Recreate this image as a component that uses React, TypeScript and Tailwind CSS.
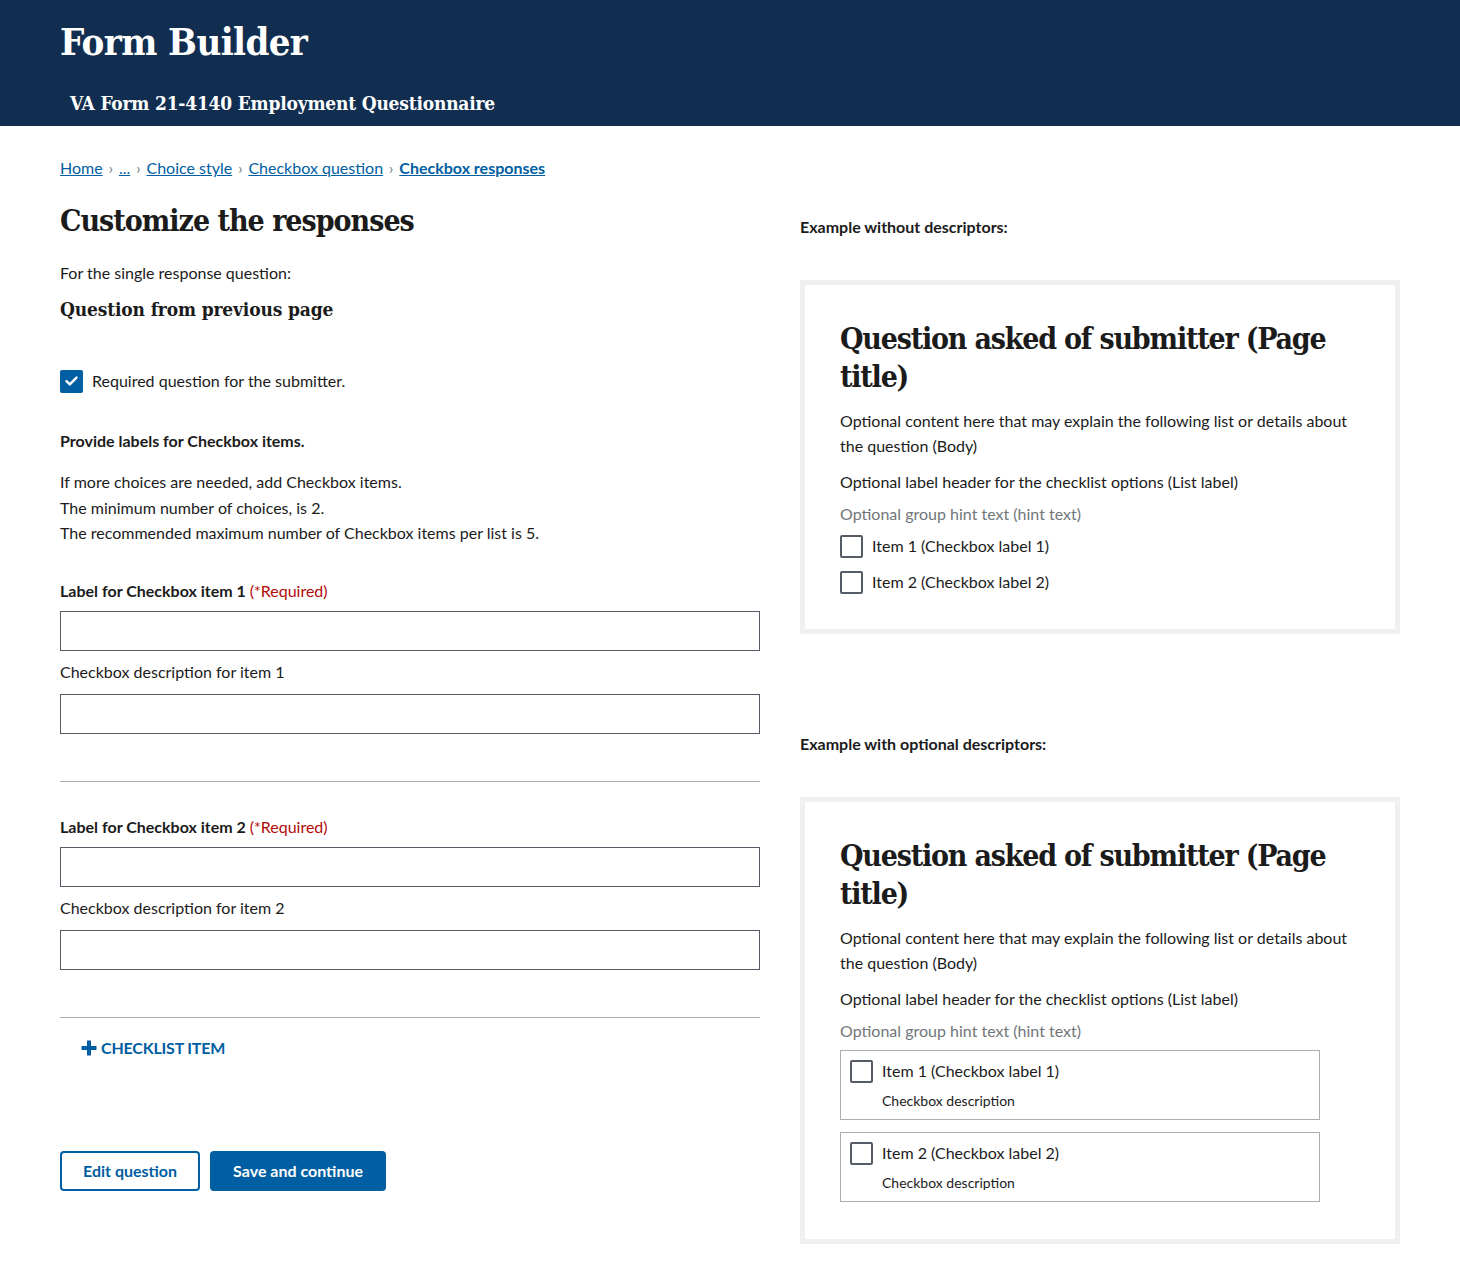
const serif = "font-['DejaVu_Serif_Condensed','DejaVu_Serif',serif]";

const Crumb = ({ children, last }: { children: string; last?: boolean }) => (
  <>
    <a className={`text-[#005ea2] underline ${last ? "font-bold" : ""}`} href="#">
      {children}
    </a>
    {!last && <span className="mx-[6px] text-[15px] text-[#71767a]">›</span>}
  </>
);

const TextField = () => (
  <input type="text" className="block h-10 w-full border border-[#565c65] bg-white px-2" />
);

const ItemFields = ({ n }: { n: number }) => (
  <div className="pt-[34px] pb-[47px] border-b border-[#a9aeb1]">
    <label className="block font-bold leading-[22px]">
      Label for Checkbox item {n} <span className="font-normal text-[#b50909]">(*Required)</span>
    </label>
    <div className="mt-[9px]">
      <TextField />
    </div>
    <div className="mt-[10px] leading-[22px]">Checkbox description for item {n}</div>
    <div className="mt-[11px]">
      <TextField />
    </div>
  </div>
);

const EmptyBox = () => (
  <span className="inline-block h-[23px] w-[23px] shrink-0 rounded-[2px] border-2 border-[#565c65] bg-white" />
);

const Preview = ({ tiles }: { tiles?: boolean }) => (
  <div className={`border-[5px] border-[#f0f0f0] px-[35px] pt-[35px] ${tiles ? "pb-[37px]" : "pb-[35px]"}`}>
    <h2 className={`${serif} text-[30px] font-bold leading-[38px] tracking-[-1.2px]`}>
      Question asked of submitter (Page title)
    </h2>
    <p className="mt-[12px] leading-[25px]">
      Optional content here that may explain the following list or details about the question (Body)
    </p>
    <p className="mt-[11px] leading-[25px]">Optional label header for the checklist options (List label)</p>
    <p className="mt-[7px] leading-[25px] text-[#71767a]">Optional group hint text (hint text)</p>
    {tiles ? (
      <div className="mt-[7px] flex w-[480px] flex-col gap-[12px]">
        {[1, 2].map((n) => (
          <div key={n} className="border border-[#a9aeb1] px-[9px] py-[8px]">
            <div className="flex items-center gap-[9px]">
              <EmptyBox />
              <span className="leading-[24px]">Item {n} (Checkbox label {n})</span>
            </div>
            <div className="mt-[8px] pl-[32px] text-[14px] leading-[20px]">Checkbox description</div>
          </div>
        ))}
      </div>
    ) : (
      <div className="mt-[8px] flex flex-col gap-[12px]">
        {[1, 2].map((n) => (
          <div key={n} className="flex items-center gap-[9px]">
            <EmptyBox />
            <span className="leading-[24px]">Item {n} (Checkbox label {n})</span>
          </div>
        ))}
      </div>
    )}
  </div>
);

export default function App() {
  return (
    <div className="min-h-[1274px] bg-white font-['Lato',sans-serif] text-[16px] text-[#1b1b1b]">
      <header className="h-[126px] bg-[#112e51] px-[60px] pt-[18px] text-white">
        <h1 className={`${serif} text-[38px] font-bold leading-[48px] tracking-[-0.6px]`}>Form Builder</h1>
        <div className={`${serif} ml-[10px] mt-[24px] text-[19px] font-bold leading-[26px] tracking-[-0.2px]`}>
          VA Form 21-4140 Employment Questionnaire
        </div>
      </header>

      <main className="flex gap-[40px] px-[60px]">
        <section className="w-[700px]">
          <nav className="pt-[30px] leading-[24px]">
            <Crumb>Home</Crumb>
            <Crumb>...</Crumb>
            <Crumb>Choice style</Crumb>
            <Crumb>Checkbox question</Crumb>
            <Crumb last>Checkbox responses</Crumb>
          </nav>
          <h2 className={`${serif} mt-[21px] text-[30px] font-bold leading-[40px] tracking-[-1px]`}>
            Customize the responses
          </h2>
          <p className="mt-[21px] leading-[22px]">For the single response question:</p>
          <h3 className={`${serif} mt-[12px] text-[19px] font-bold leading-[26px] tracking-[-0.15px]`}>
            Question from previous page
          </h3>

          <div className="mt-[47px] flex items-center gap-[9px]">
            <span className="flex h-[23px] w-[23px] items-center justify-center rounded-[2px] bg-[#005ea2]">
              <svg width="13" height="10" viewBox="0 0 13 10" fill="none">
                <path d="M1.5 5.2 4.8 8.4 11.5 1.6" stroke="white" strokeWidth="2.4" strokeLinecap="round" strokeLinejoin="round" />
              </svg>
            </span>
            <span className="leading-[24px]">Required question for the submitter.</span>
          </div>

          <p className="mt-[36px] font-bold leading-[24px]">Provide labels for Checkbox items.</p>
          <div className="mt-[16px] leading-[25.5px]">
            <p>If more choices are needed, add Checkbox items.</p>
            <p>The minimum number of choices, is 2.</p>
            <p>The recommended maximum number of Checkbox items per list is 5.</p>
          </div>

          <div>
            <ItemFields n={1} />
            <ItemFields n={2} />
          </div>

          <button className="ml-[20px] mt-[18px] flex items-center gap-[3px] font-bold uppercase leading-[24px] tracking-[-0.2px] text-[#005ea2]">
            <svg width="18" height="18" viewBox="0 0 18 18">
              <path d="M7 1.5h4v5.5h5.5v4H11v5.5H7V11H1.5V7H7z" fill="#005ea2" />
            </svg>
            Checklist item
          </button>

          <div className="mt-[91px] flex gap-[10px]">
            <button className="h-10 rounded-[4px] border-2 border-[#005ea2] px-[21px] font-bold text-[#005ea2]">
              Edit question
            </button>
            <button className="h-10 rounded-[4px] bg-[#005ea2] px-[23px] font-bold text-white">Save and continue</button>
          </div>
        </section>

        <aside className="w-[600px]">
          <p className="mt-[89px] font-bold leading-[24px]">Example without descriptors:</p>
          <div className="mt-[41px]">
            <Preview />
          </div>
          <p className="mt-[98px] font-bold leading-[24px]">Example with optional descriptors:</p>
          <div className="mt-[41px]">
            <Preview tiles />
          </div>
        </aside>
      </main>
    </div>
  );
}
